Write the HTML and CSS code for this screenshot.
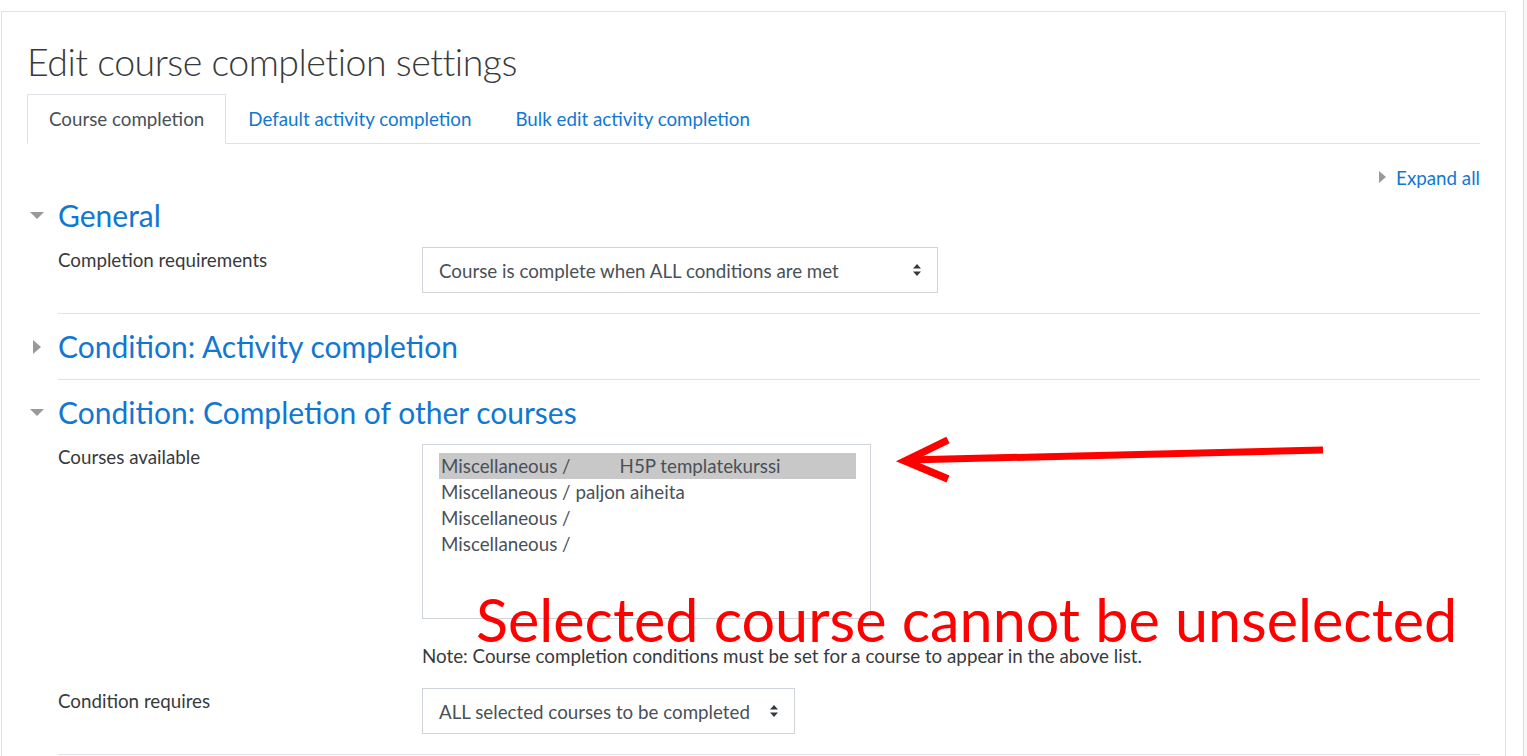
FILE: index.html
```html
<!DOCTYPE html>
<html lang="en">
<head>
    <meta charset="UTF-8">
    <meta name="viewport" content="width=device-width, initial-scale=1.0">
    <title>Edit course completion settings</title>
    <link rel="stylesheet" href="styles.css">
</head>
<body>

    <div class="card">
        <h2 class="page-title">Edit course completion settings</h2>

        <ul class="nav-tabs">
            <li class="tab active">Course completion</li>
            <li class="tab"><a href="#">Default activity completion</a></li>
            <li class="tab"><a href="#">Bulk edit activity completion</a></li>
        </ul>

        <div class="collapse-actions">
            <span class="caret caret-right small"></span>
            <a href="#">Expand all</a>
        </div>

        <section class="collapsible">
            <div class="collapsible-head">
                <span class="caret-box"><span class="caret caret-down"></span></span>
                <h3>General</h3>
            </div>
            <div class="collapsible-body">
                <div class="form-row">
                    <label class="form-label">Completion requirements</label>
                    <div class="select select-wide">
                        <span>Course is complete when ALL conditions are met</span>
                        <svg class="sort-icon" width="8" height="12" viewBox="0 0 8 12"><path d="M0 4.5 L4 0 L8 4.5 Z M0 7.5 L8 7.5 L4 12 Z"/></svg>
                    </div>
                </div>
            </div>
        </section>

        <section class="collapsible">
            <div class="collapsible-head">
                <span class="caret-box"><span class="caret caret-right"></span></span>
                <h3>Condition: Activity completion</h3>
            </div>
        </section>

        <section class="collapsible">
            <div class="collapsible-head">
                <span class="caret-box"><span class="caret caret-down"></span></span>
                <h3>Condition: Completion of other courses</h3>
            </div>
            <div class="collapsible-body">
                <div class="form-row">
                    <label class="form-label">Courses available</label>
                    <div class="listbox">
                        <div class="option selected">Miscellaneous /<span class="course-gap"></span>H5P templatekurssi</div>
                        <div class="option">Miscellaneous / paljon aiheita</div>
                        <div class="option">Miscellaneous /</div>
                        <div class="option">Miscellaneous /</div>
                    </div>
                </div>
                <p class="form-note">Note: Course completion conditions must be set for a course to appear in the above list.</p>
                <div class="form-row">
                    <label class="form-label">Condition requires</label>
                    <div class="select select-narrow">
                        <span>ALL selected courses to be completed</span>
                        <svg class="sort-icon" width="8" height="12" viewBox="0 0 8 12"><path d="M0 4.5 L4 0 L8 4.5 Z M0 7.5 L8 7.5 L4 12 Z"/></svg>
                    </div>
                </div>
            </div>
        </section>

        <!-- annotation drawn over the screenshot -->
        <svg class="note-arrow" width="440" height="60" viewBox="0 0 440 60">
            <line x1="12" y1="30" x2="428" y2="20" stroke="#ff0000" stroke-width="7"/>
            <polyline points="53,10 10,31 53,49" fill="none" stroke="#ff0000" stroke-width="7.5"/>
        </svg>
        <div class="annotation">Selected course cannot be unselected</div>
    </div>

    <div class="scroll-edge"></div>

</body>
</html>
```

FILE: styles.css
```css
html, body {
    height: 756px;
    overflow: hidden;
}

body {
    margin: 0;
    display: flex;
    font-family: "Lato", "Open Sans", sans-serif;
    font-size: 18.75px;
    color: #373a3c;
    background-color: #fff;
}

a {
    color: #1177d1;
    text-decoration: none;
}

.card {
    position: relative;
    box-sizing: border-box;
    width: 1505px;
    min-height: 800px;
    margin: 11px 0 0 1px;
    padding: 26px 25px 0 25px;
    border: 1px solid #dfe2e6;
    border-bottom: none;
}

.scroll-edge {
    width: 3px;
    margin-left: 17px;
    border-left: 1px solid #dcdcdc;
    background-color: #f7f7f7;
}

.page-title {
    margin: 0;
    font-size: 37.5px;
    font-weight: 300;
    line-height: 48px;
    letter-spacing: -0.5px;
    color: #373a3c;
}

/* tabs */

.nav-tabs {
    display: flex;
    margin: 8px 0 0 0;
    padding: 0;
    list-style: none;
    border-bottom: 1px solid #dee2e6;
}

.tab {
    margin-bottom: -1px;
    padding: 0 21px;
    line-height: 48px;
    border: 1px solid transparent;
}

.tab.active {
    color: #495057;
    background-color: #fff;
    border-color: #dee2e6 #dee2e6 #fff;
}

/* carets */

.caret {
    display: inline-block;
    width: 0;
    height: 0;
    border-style: solid;
    border-color: transparent;
}

.caret-down {
    border-width: 7px 7px 0 7px;
    border-top-color: #999;
}

.caret-right {
    border-width: 7px 0 7px 8px;
    border-left-color: #999;
}

.caret-right.small {
    border-width: 6.5px 0 6.5px 7px;
    margin-right: 10px;
}

.collapse-actions {
    display: flex;
    align-items: center;
    justify-content: flex-end;
    height: 10px;
    margin-top: 28px;
    margin-bottom: 1px;
}

/* sections */

.collapsible {
    margin-left: 31px;
    padding: 16px 0;
    border-bottom: 1px solid #dee2e6;
}

.collapsible-head {
    display: flex;
    align-items: center;
    margin-left: -31px;
}

.caret-box {
    display: flex;
    justify-content: center;
    width: 20px;
    margin-right: 11px;
}

.collapsible-head h3 {
    margin: 0;
    font-size: 30px;
    font-weight: 400;
    line-height: 33px;
    color: #1177d1;
}

.collapsible-body {
    margin-top: 15px;
    margin-bottom: 4px;
}

.form-row {
    display: flex;
    align-items: flex-start;
    margin-bottom: 20px;
}

.form-row:last-child {
    margin-bottom: 0;
}

.form-label {
    width: 364px;
    line-height: 26px;
}

.select {
    box-sizing: border-box;
    display: flex;
    align-items: center;
    justify-content: space-between;
    height: 46px;
    padding: 0 16px;
    border: 1px solid #ced4da;
    color: #495057;
}

.select-wide {
    width: 516px;
}

.select-narrow {
    width: 373px;
}

.sort-icon {
    fill: #343a40;
}

.listbox {
    box-sizing: border-box;
    width: 449px;
    height: 175px;
    padding: 8px 14px 0 16px;
    border: 1px solid #ced4da;
    color: #495057;
}

.option {
    padding-left: 2px;
    line-height: 26px;
    white-space: nowrap;
}

.option.selected {
    background-color: #c8c8c8;
}

.course-gap {
    display: inline-block;
    width: 49px;
}

.form-note {
    margin: 0 0 20px 364px;
    padding-top: 5px;
    line-height: 24px;
}

/* annotation */

.note-arrow {
    position: absolute;
    left: 893px;
    top: 418px;
}

.annotation {
    position: absolute;
    left: 474px;
    top: 587px;
    font-family: "Lato", sans-serif;
    font-size: 59.3px;
    line-height: 40px;
    color: #ff0000;
    white-space: nowrap;
}
```
